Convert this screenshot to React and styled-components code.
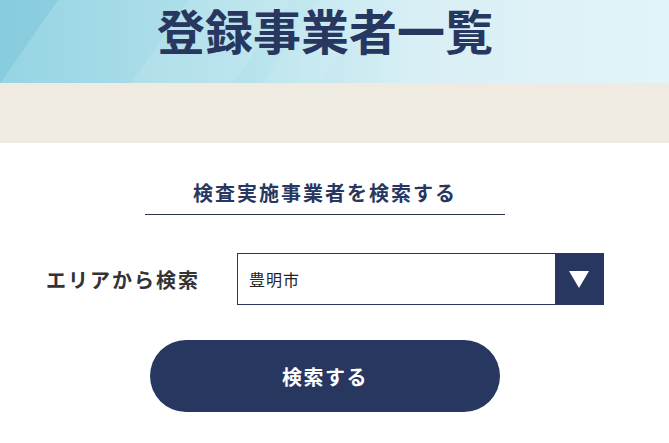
import React from "react";
import styled, { createGlobalStyle } from "styled-components";

const Global = createGlobalStyle`
  html, body { margin: 0; padding: 0; background: #fff; }
  body { font-family: "Noto Sans CJK JP", "Noto Sans", sans-serif; }
`;

const NAVY = "#27375f";

const Hero = styled.header`
  height: 83px;
  box-sizing: border-box;
  padding-top: 5px;
  background:
    linear-gradient(125deg, rgba(120,196,216,0.5) 0 8%, transparent 8% 100%),
    linear-gradient(125deg, transparent 0 26%, rgba(255,255,255,0.1) 26% 40%, transparent 40% 100%),
    linear-gradient(125deg, transparent 0 44%, rgba(255,255,255,0.08) 44% 52%, transparent 52% 100%),
    linear-gradient(90deg, #96d4e3 0%, #b3e1eb 35%, #d8eff5 62%, #e3f4f8 100%);
`;

const Inner = styled.div`
  width: 650px;
  display: flex;
  flex-direction: column;
  align-items: center;
`;

const Title = styled.h1`
  margin: 0;
  font-size: 48px;
  line-height: 56px;
  margin-top: -4px;
  font-weight: 700;
  color: ${NAVY};
`;

const Band = styled.div`
  height: 60px;
  background: #f0ebe1;
`;

const Main = styled.main`
  width: 650px;
  display: flex;
  flex-direction: column;
  align-items: center;
  padding-top: 35px;
`;

const SubTitle = styled.h2`
  margin: 0;
  width: 360px;
  box-sizing: border-box;
  padding-bottom: 6px;
  border-bottom: 1px solid #2b3448;
  text-align: center;
  font-size: 20px;
  line-height: 30px;
  font-weight: 700;
  letter-spacing: 2px;
  color: ${NAVY};
`;

const Row = styled.div`
  margin-top: 38px;
  width: 558px;
  display: flex;
  align-items: center;
  justify-content: space-between;
`;

const Label = styled.span`
  font-size: 20px;
  font-weight: 700;
  letter-spacing: 2px;
  color: #333;
`;

const SelectBox = styled.div`
  width: 367px;
  height: 52px;
  box-sizing: border-box;
  border: 1px solid ${NAVY};
  display: flex;
  align-items: stretch;
`;

const Value = styled.span`
  flex: 1;
  display: flex;
  align-items: center;
  padding-left: 11px;
  font-size: 16px;
  letter-spacing: 1px;
  color: #222;
`;

const Arrow = styled.span`
  width: 48px;
  background: ${NAVY};
  display: flex;
  align-items: center;
  justify-content: center;
`;

const Button = styled.button`
  margin-top: 35px;
  width: 350px;
  height: 72px;
  border: none;
  border-radius: 36px;
  background: ${NAVY};
  color: #fff;
  font-family: inherit;
  font-size: 20px;
  font-weight: 700;
  letter-spacing: 1.5px;
  cursor: pointer;
`;

export default function App() {
  return (
    <>
      <Global />
      <Hero>
        <Inner>
          <Title>登録事業者一覧</Title>
        </Inner>
      </Hero>
      <Band />
      <Main>
        <SubTitle>検査実施事業者を検索する</SubTitle>
        <Row>
          <Label>エリアから検索</Label>
          <SelectBox>
            <Value>豊明市</Value>
            <Arrow>
              <svg width="20" height="17" viewBox="0 0 20 17">
                <polygon points="0,0 20,0 10,17" fill="#fff" />
              </svg>
            </Arrow>
          </SelectBox>
        </Row>
        <Button>検索する</Button>
      </Main>
    </>
  );
}
